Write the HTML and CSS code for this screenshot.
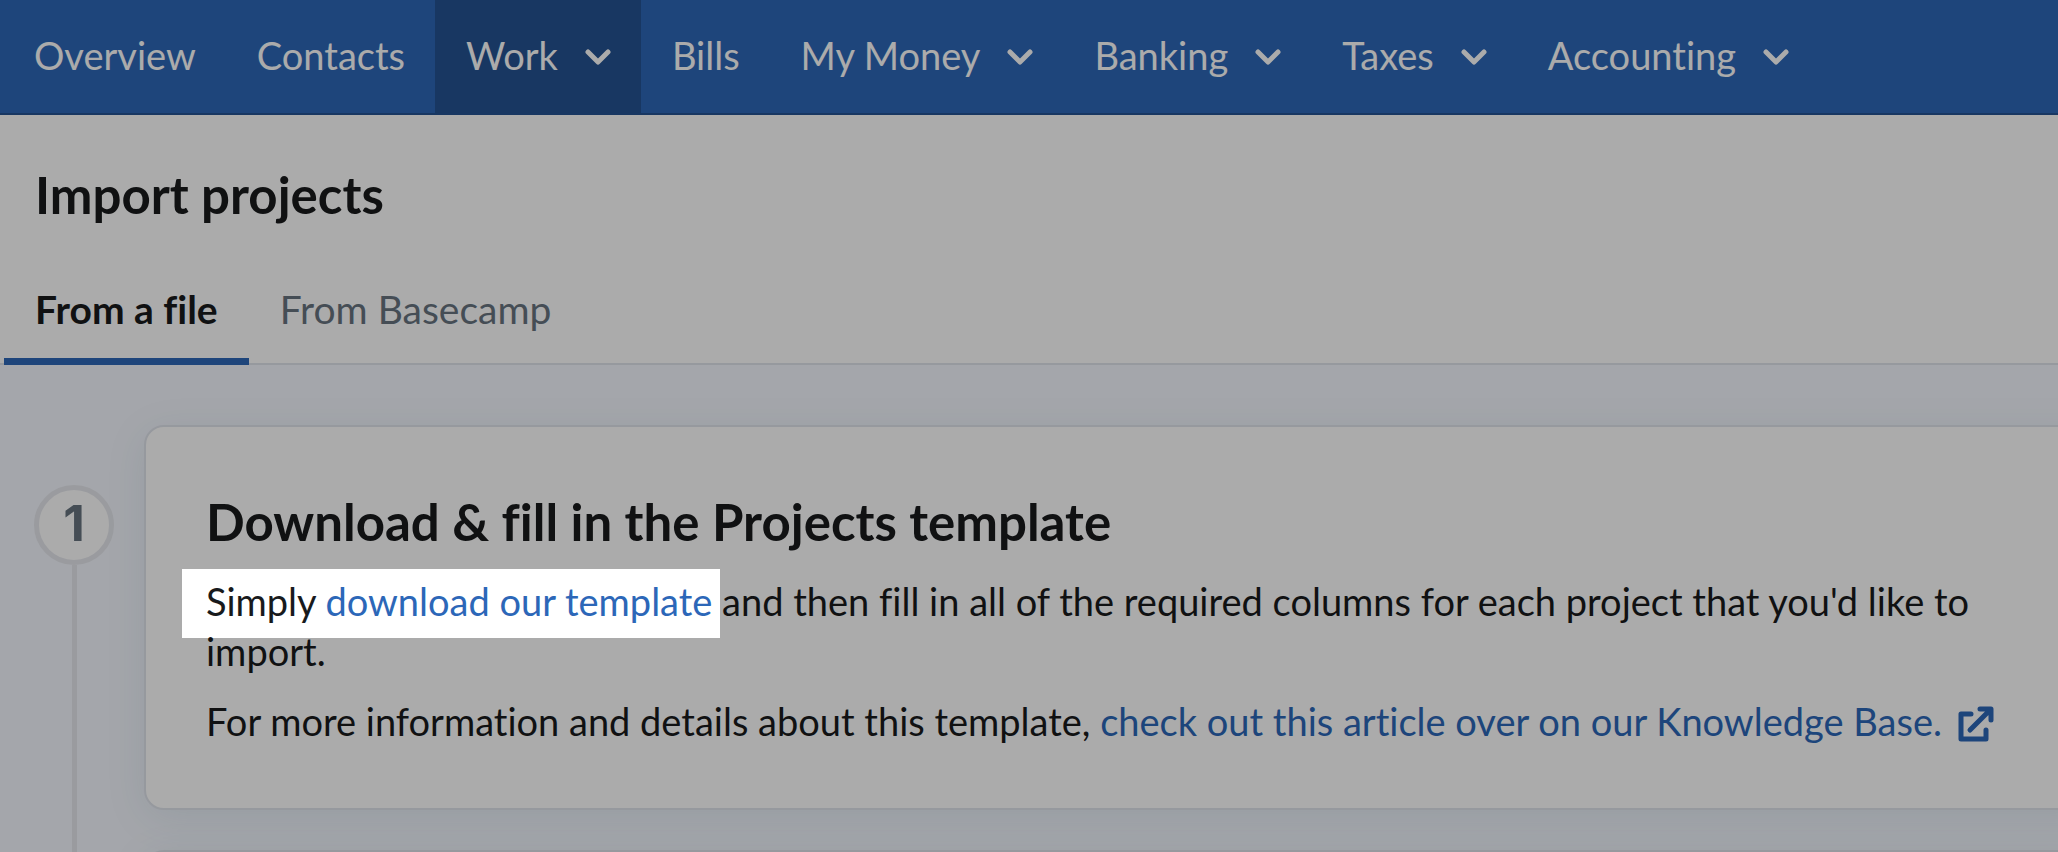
FILE: index.html
```html
<!DOCTYPE html>
<html lang="en">
<head>
  <meta charset="utf-8">
  <title>Import projects</title>
  <link rel="stylesheet" href="styles.css">
</head>
<body>

<nav class="nav">
  <a class="nav-item" href="#">Overview</a>
  <a class="nav-item" href="#">Contacts</a>
  <a class="nav-item active" href="#">Work <svg class="chevron" viewBox="0 0 26 16"><path d="M3 3l10 10L23 3"/></svg></a>
  <a class="nav-item" href="#">Bills</a>
  <a class="nav-item" href="#">My Money <svg class="chevron" viewBox="0 0 26 16"><path d="M3 3l10 10L23 3"/></svg></a>
  <a class="nav-item" href="#">Banking <svg class="chevron" viewBox="0 0 26 16"><path d="M3 3l10 10L23 3"/></svg></a>
  <a class="nav-item" href="#">Taxes <svg class="chevron" viewBox="0 0 26 16"><path d="M3 3l10 10L23 3"/></svg></a>
  <a class="nav-item" href="#">Accounting <svg class="chevron" viewBox="0 0 26 16"><path d="M3 3l10 10L23 3"/></svg></a>
</nav>

<header class="header">
  <h1>Import projects</h1>
  <div class="tabs">
    <a class="tab selected" href="#">From a file</a>
    <a class="tab" href="#">From Basecamp</a>
  </div>
</header>

<main class="steps">
  <section class="step">
    <div class="step-marker"><span class="step-number">1</span></div>
    <div class="card">
      <h2>Download &amp; fill in the Projects template</h2>
      <p><span class="spotlight">Simply <a href="#">download our template</a></span> and then fill in all of the required columns for each project that you'd like to import.</p>
      <p>For more information and details about this template, <a href="#">check out this article over on our Knowledge Base.<svg class="external" viewBox="0 0 36 36"><path d="M13 8H3v25h25V24M12 24L32 4M22 3h11v11"/></svg></a></p>
    </div>
  </section>
  <section class="step">
    <div class="step-marker"></div>
    <div class="card"></div>
  </section>
</main>

</body>
</html>
```

FILE: styles.css
```css
* { box-sizing: border-box; }
html, body { height: 100%; }
body { margin: 0; overflow: hidden; font-family: Lato, "Liberation Sans", sans-serif; font-size: 38px; line-height: 50px; font-variant-ligatures: none; color: #181a1c; background: #f5f8ff; }
a { color: #2c67b8; text-decoration: none; }
h1, h2 { margin: 0; font-size: 51px; line-height: 60px; font-weight: 700; }
p { margin: 0 0 20px; }
p:last-child { margin-bottom: 0; }
svg { fill: none; stroke: currentColor; stroke-width: 5; stroke-linecap: round; stroke-linejoin: round; }

.nav { display: flex; height: 115px; padding-left: 3px; background: #2d67b8; border-bottom: 2px solid #245292; }
.nav-item { display: flex; align-items: center; gap: 27px; padding: 0 30px 4px 31px; color: #fff; white-space: nowrap; }
.nav-item.active { background: #245292; }
.chevron { width: 26px; height: 16px; margin-top: 4px; }

.header { padding-top: 50px; background: #fff; border-bottom: 2px solid #e0e4ec; }
.header h1 { padding: 0 35px; }
.tabs { display: flex; margin: 52px 4px -2px; font-size: 39px; }
.tab { padding: 7px 31px 24px; color: #67747f; border-bottom: 7px solid transparent; }
.tab.selected { color: #181a1c; font-weight: 700; border-color: #2d67b8; }

.steps { padding: 60px 0 0 34px; }
.step { display: flex; gap: 30px; }
.step-marker { display: flex; flex-direction: column; align-items: center; width: 80px; }
.step-marker::after { content: ""; flex: 1; width: 5px; background: #e6e8ee; }
.step-number { width: 80px; height: 80px; margin-top: 60px; border: 5px solid #e6e8ee; border-radius: 50%; background: #fff; color: #67747f; font-family: Inter, sans-serif; font-size: 50px; font-weight: 700; line-height: 66px; text-align: center; }
/* the card runs off the right edge of the window */
.card { flex: 1; min-height: 80px; margin: 0 -40px 40px 0; padding: 65px 100px 62px 60px; background: #fff; border: 2px solid #e0e4ec; border-radius: 20px; box-shadow: 0 8px 40px rgba(45, 103, 130, .1); }
.card h2 { margin-bottom: 24px; }
.external { width: 36px; height: 36px; margin-left: 16px; vertical-align: -6px; }

/* dims the whole page except the highlighted words */
.spotlight { position: relative; }
.spotlight::after { content: ""; position: absolute; z-index: 10; inset: -9px -8px -14px -24px; box-shadow: 0 0 0 200vmax rgba(0, 0, 0, .33); pointer-events: none; }
```
